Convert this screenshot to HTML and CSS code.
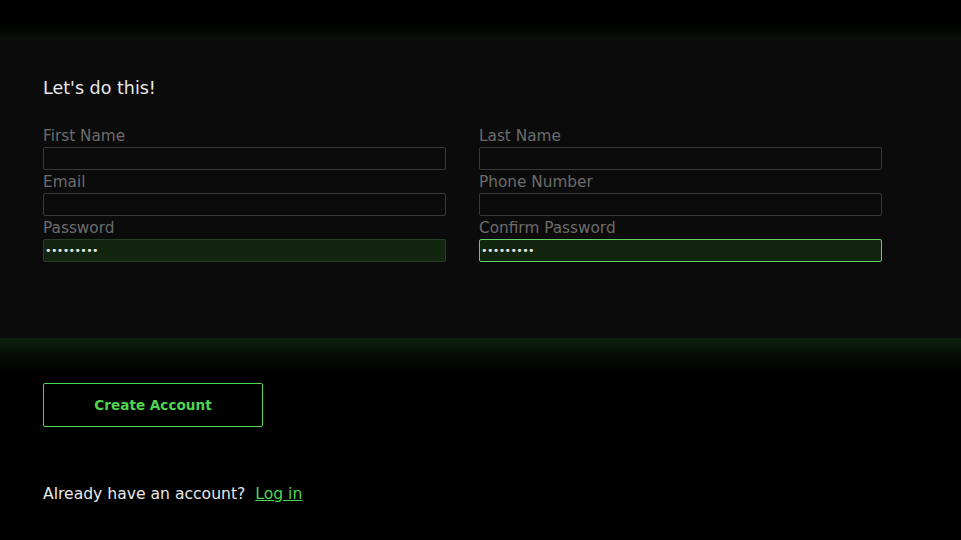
FILE: index.html
```html
<!DOCTYPE html>
<html lang="en">
<head>
<meta charset="utf-8">
<title>Sign up</title>
<link rel="stylesheet" href="styles.css">
</head>
<body>
<div class="top-glow"></div>
<section class="panel">
  <h1 class="title">Let's do this!</h1>
  <form class="grid">
    <div class="field"><label class="label">First Name</label><input class="input" type="text"></div>
    <div class="field"><label class="label">Last Name</label><input class="input" type="text"></div>
    <div class="field"><label class="label">Email</label><input class="input" type="email"></div>
    <div class="field"><label class="label">Phone Number</label><input class="input" type="tel"></div>
    <div class="field"><label class="label">Password</label><input class="input filled" type="password" value="password1"></div>
    <div class="field"><label class="label">Confirm Password</label><input class="input filled focused" type="password" value="password1" autofocus></div>
  </form>
</section>
<section class="actions">
  <button class="btn" type="button">Create Account</button>
  <p class="login">Already have an account? <a class="link" href="#">Log in</a></p>
</section>
</body>
</html>
```
FILE: styles.css
```css
html, body {
  margin: 0;
  padding: 0;
  background: #000;
  font-family: "DejaVu Sans", "Liberation Sans", sans-serif;
}
.top-glow {
  height: 40px;
  background: linear-gradient(to bottom, #000 0, #000 24px, #0a120a 40px);
}
.panel {
  background: #0b0b0b;
  height: 298px;
  box-sizing: border-box;
  padding: 35px 43px 0;
}
.title {
  margin: 0 0 22px;
  font-size: 17.5px;
  line-height: 27px;
  font-weight: normal;
  color: #e8e8e8;
}
.grid {
  display: grid;
  grid-template-columns: 403px 403px;
  column-gap: 33px;
}
.field {
  display: flex;
  flex-direction: column;
}
.label {
  font-size: 15.3px;
  line-height: 22px;
  padding-top: 1px;
  color: #6c6c6c;
}
.input {
  box-sizing: border-box;
  height: 23px;
  width: 100%;
  margin: 0;
  padding: 0 1px;
  background: #0b0b0b;
  border: 1px solid #383838;
  border-radius: 2px;
  color: #e8e8e8;
  font-family: "DejaVu Sans", sans-serif;
  font-size: 11px;
  letter-spacing: -0.6px;
  outline: none;
  caret-color: #e8e8e8;
}
.input.filled {
  background: #12260f;
  border-color: #2c3a2b;
}
.input.focused {
  border-color: #62d062;
}
.actions {
  background: linear-gradient(to bottom, #0f1f0f 0, #060c06 18px, #000 36px);
  padding: 45px 43px 0;
  height: 202px;
  box-sizing: border-box;
}
.btn {
  display: block;
  width: 220px;
  height: 44px;
  margin: 0;
  background: transparent;
  border: 1px solid #4fd44f;
  border-radius: 2px;
  color: #4fd44f;
  font-family: "DejaVu Sans", sans-serif;
  font-size: 13.6px;
  font-weight: bold;
}
.login {
  margin: 56px 0 0;
  font-size: 15.6px;
  line-height: 23px;
  color: #e8e8e8;
}
.link {
  color: #4fd44f;
  margin-left: 5px;
}
```
